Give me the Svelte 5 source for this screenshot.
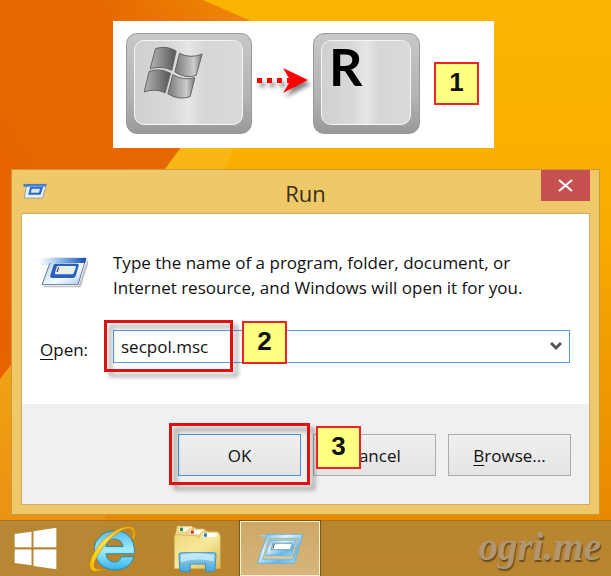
<script>
	let command = 'secpol.msc';
	const pinned = ['Start', 'Internet Explorer', 'File Explorer'];
</script>

<div class="desktop">
	<svg class="wallpaper" viewBox="0 0 611 576" preserveAspectRatio="none" aria-hidden="true">
		<defs>
			<linearGradient id="sun" x1="0" y1="0" x2="0" y2="1">
				<stop offset="0" stop-color="#fbb500" />
				<stop offset=".35" stop-color="#f9ae00" />
				<stop offset="1" stop-color="#e68200" />
			</linearGradient>
			<linearGradient id="ember" x1="0" y1="1" x2="1" y2="0">
				<stop offset="0" stop-color="#e76200" />
				<stop offset=".7" stop-color="#e66a00" />
				<stop offset="1" stop-color="#f08a06" />
			</linearGradient>
		</defs>
		<rect width="611" height="576" fill="url(#sun)" />
		<path d="M0 0H203L251 21 190 135 165 169 0 379Z" fill="url(#ember)" />
		<path d="M190 135 165 169 0 379V576H85L225 169 234 148V135Z" fill="#fff" opacity=".08" />
	</svg>

	<section class="keys">
		<div class="key wide">
			<div class="cap">
				<svg class="flag" viewBox="425 138 185 162" aria-label="Windows key">
					<defs>
						<linearGradient id="pane">
							<stop offset="0" stop-color="#b5b5b5" />
							<stop offset="1" stop-color="#555" />
						</linearGradient>
						<linearGradient id="pane2">
							<stop offset="0" stop-color="#777" />
							<stop offset=".7" stop-color="#ccc" />
							<stop offset="1" stop-color="#777" />
						</linearGradient>
					</defs>
					<g stroke="#666" stroke-width="3">
						<path d="M465 146Q497 135 527 153L514 211Q482 196 449 206Z" fill="url(#pane)" />
						<path d="M537 160Q570 177 605 162L587 226Q558 238 523 216Z" fill="url(#pane2)" />
						<path d="M446 214Q478 203 510 220L494 278Q463 264 431 276Z" fill="url(#pane)" />
						<path d="M517 224Q549 243 583 233L569 290Q534 302 502 281Z" fill="url(#pane2)" />
					</g>
				</svg>
			</div>
		</div>
		<svg class="arrow" viewBox="0 0 56 34" aria-hidden="true">
			<path d="M2 15h5v5H2zM12 15h5v5h-5zM22 15h5v5h-5zM28 5 53 17 28 30 34 20H32V15h2Z" fill="#f00" />
		</svg>
		<div class="key">
			<div class="cap letter">R</div>
		</div>
		<span class="badge">1</span>
	</section>

	<main class="window">
		<header>
			<svg class="small-run" viewBox="72 68 74 48" aria-hidden="true">
				<path d="M83 72H142L130 113H75Z" fill="#e7f1fb" stroke="#6888aa" stroke-width="2" />
				<path d="M73 71H142L139 79H73Z" fill="#3477cf" opacity=".9" />
				<path d="M93 80H132L124 103H87Z" fill="#2d68c3" />
				<path d="M98 85H123L119 97H95Z" fill="#d9e5e3" />
			</svg>
			<h1>Run</h1>
			<button class="close" aria-label="Close">
				<svg viewBox="0 0 15 13"><path d="M1 1 14 12M14 1 1 12" stroke="#fff" stroke-width="2" /></svg>
			</button>
		</header>

		<div class="client">
			<div class="body">
				<div class="intro">
					<svg class="large-run" viewBox="120 288 150 96" aria-hidden="true">
						<defs>
							<linearGradient id="glass" x1="0" y1="0" x2="1" y2="1">
								<stop offset="0" stop-color="#a3caee" />
								<stop offset=".6" stop-color="#f5faff" />
								<stop offset="1" stop-color="#a7c5ee" />
							</linearGradient>
							<linearGradient id="trail">
								<stop offset="0" stop-color="#fff" />
								<stop offset=".5" stop-color="#80b1e6" />
								<stop offset="1" stop-color="#164dac" />
							</linearGradient>
						</defs>
						<path d="M133 382H242L265 309 262 298 236 378H130Z" fill="#999" opacity=".6" />
						<path d="M120 296H155L148 316H126Z" fill="#cfe4f8" opacity=".7" />
						<path d="M155 295H258L234 374H126Z" fill="url(#glass)" stroke="#607897" stroke-width="3" />
						<path d="M120 294H259L255 309H120Z" fill="url(#trail)" />
						<path d="M166 311H231Q238 311 236 318L227 348Q225 354 218 354H157Q149 354 151 346L160 317Q161 311 166 311Z" fill="#2860bd" />
						<path d="M174 318H225Q229 318 228 322L221 340Q220 343 215 343H168Q164 343 165 338L170 322Q171 318 174 318Z" fill="#e8eeec" />
						<path d="M176 322 171 336" stroke="#222" stroke-width="3" />
					</svg>
					<p>Type the name of a program, folder, document, or Internet resource, and Windows will open it for you.</p>
				</div>
				<div class="field">
					<label for="command"><u>O</u>pen:</label>
					<div class="combo">
						<input id="command" type="text" bind:value={command} />
						<button class="drop" aria-label="Show history">
							<svg viewBox="0 0 12 9"><path d="M1 1 6 6 11 1" fill="none" stroke="#555" stroke-width="3" /></svg>
						</button>
						<span class="mark mark-input"></span>
						<span class="badge badge-input">2</span>
					</div>
				</div>
			</div>
			<footer>
				<div class="confirm">
					<button class="push default">OK</button>
					<span class="mark mark-ok"></span>
					<span class="badge badge-ok">3</span>
				</div>
				<button class="push">Cancel</button>
				<button class="push"><u>B</u>rowse...</button>
			</footer>
		</div>
	</main>

	<nav class="taskbar">
		<button class="task" aria-label={pinned[0]}>
			<svg class="start" viewBox="40 79 130 130">
				<path d="M42 100 93 93V140H42ZM99 92 168 81V140H99ZM42 147H93V195L42 188ZM99 147H168V207L99 197Z" fill="#fff" />
			</svg>
		</button>
		<button class="task" aria-label={pinned[1]}>
			<svg class="ie" viewBox="264 70 142 140">
				<defs>
					<linearGradient id="ie-blue" x1="0" y1="0" x2="0" y2="1">
						<stop offset="0" stop-color="#55bce9" />
						<stop offset=".5" stop-color="#a1edff" />
						<stop offset="1" stop-color="#32b4ec" />
					</linearGradient>
					<linearGradient id="ring" x1="1" y1="0" x2="0" y2="1">
						<stop offset="0" stop-color="#e8a000" />
						<stop offset=".5" stop-color="#ffe450" />
						<stop offset="1" stop-color="#f6b800" />
					</linearGradient>
				</defs>
				<path d="M400 165H361Q357 181 341 181 319 181 315 156H401Q404 120 382 100 364 84 338 86 302 89 285 120 275 142 286 169 302 204 343 205 388 204 400 165ZM315 134Q319 113 341 111 364 113 367 134Z" fill="url(#ie-blue)" fill-rule="evenodd" stroke="#2588af" stroke-width="3" />
				<path d="M400 112C410 86 400 73 383 73 355 73 318 99 292 133 268 165 260 194 271 205 280 213 295 208 308 201 296 203 286 204 281 198 275 187 287 163 308 134 331 104 362 80 384 80 397 81 399 92 394 108Z" fill="url(#ring)" stroke="#c48100" stroke-width="2" />
			</svg>
		</button>
		<button class="task" aria-label={pinned[2]}>
			<svg class="folder" viewBox="516 70 146 146">
				<defs>
					<linearGradient id="manila" x1="0" y1="0" x2="1" y2="1">
						<stop offset="0" stop-color="#eed57a" />
						<stop offset=".5" stop-color="#f7e99c" />
						<stop offset="1" stop-color="#d9bd56" />
					</linearGradient>
					<linearGradient id="stand" x1="0" y1="0" x2="0" y2="1">
						<stop offset="0" stop-color="#9bd5ef" />
						<stop offset="1" stop-color="#4ba7da" />
					</linearGradient>
				</defs>
				<path d="M523 100 528 77Q530 74 536 76H571L577 81H585V110H523Z" fill="#edd68a" stroke="#c4a046" />
				<path d="M535 80H571V92H535Z" fill="#fff" /><path d="M537 81H546V91H537Z" fill="#258a54" />
				<path d="M553 110 560 88Q561 84 566 84H608L614 90H621V115H553Z" fill="#efd991" stroke="#c4a046" />
				<path d="M567 88H607V100H567Z" fill="#fff" /><path d="M569 89H578V99H569Z" fill="#d73525" />
				<path d="M520 106Q520 101 526 102L584 105 594 111 600 95Q602 92 607 93H647Q653 93 654 100L657 106V203H520Z" fill="url(#manila)" stroke="#cdac4c" stroke-width="2" />
				<path d="M605 97H646V109H605Z" fill="#fff" /><path d="M608 98H617V108H608Z" fill="#2879c2" />
				<path d="M534 163Q534 156 542 156H636Q644 156 644 163L641 207Q640 212 634 212H613V189H567V212H543Q537 212 536 205Z" fill="url(#stand)" stroke="#3a91c3" stroke-width="3" />
				<path d="M540 162Q589 150 638 164L637 182Q588 168 539 184Z" fill="#d5f2fc" opacity=".7" />
			</svg>
		</button>
		<button class="task active" aria-label="Run">
			<svg class="run-task" viewBox="78 92 145 98">
				<defs>
					<linearGradient id="ice" x1="0" y1="0" x2="1" y2="1">
						<stop offset="0" stop-color="#54b1ea" />
						<stop offset=".35" stop-color="#e3f5fd" />
						<stop offset=".7" stop-color="#62b8ec" />
						<stop offset="1" stop-color="#b8e2f6" />
					</linearGradient>
				</defs>
				<path d="M86 102H112M93 108H110M100 115H108" stroke="#9fcbe0" stroke-width="3" />
				<path d="M112 98H219L194 186H82Z" fill="url(#ice)" stroke="#6fb1d8" stroke-width="3" />
				<path d="M116 110H207L188 174H98Z" fill="#d3c79d" stroke="#6fb1d8" stroke-width="2" />
				<path d="M121 116H199L184 162H107Z" fill="url(#ice)" stroke="#5fa8d8" stroke-width="2" />
				<path d="M130 125H188L182 145H123Z" fill="#fff" stroke="#6894b5" stroke-width="3" />
				<path d="M133 127 129 142" stroke="#456" stroke-width="3" />
			</svg>
		</button>
		<span class="watermark">ogri.me</span>
	</nav>
</div>

<style>
	:global(body) {
		margin: 0;
	}
	* {
		box-sizing: border-box;
	}
	.desktop {
		position: relative;
		display: flex;
		flex-direction: column;
		min-height: 100vh;
		overflow: hidden;
		color: #111;
		font: 17px/25px "Open Sans", "Noto Sans", sans-serif;
	}
	.wallpaper {
		position: absolute;
		inset: 0;
		width: 100%;
		height: 100%;
		z-index: -1;
	}
	svg {
		display: block;
		flex: none;
	}
	.keys {
		align-self: flex-start;
		display: flex;
		align-items: center;
		margin: 21px 0 0 113px;
		padding: 12px 15px 14px 13px;
		background: #fff;
	}
	.key {
		width: 107px;
		height: 101px;
		padding: 6px 8px 8px 7px;
		border: 1px solid #999;
		border-radius: 11px;
		background: linear-gradient(#c8c8c8, #b2b2b2 65%, #999);
	}
	.key.wide {
		width: 126px;
	}
	.cap {
		height: 100%;
		padding: 5px 7px;
		border: 1px solid #f5f5f5;
		border-radius: 10px;
		background: linear-gradient(90deg, #d0d0d0, #d9d9d9 35%, #e6e6e6 50%, #d6d6d6 65%, #dadada);
		color: #000;
	}
	.letter {
		padding: 4px 7px;
		font: bold 52px/42px Lato, sans-serif;
	}
	.flag {
		width: 62px;
		height: 54px;
	}
	.arrow {
		width: 56px;
		height: 34px;
		margin: 0 2px 8px 3px;
		filter: drop-shadow(3px 4px 2px rgba(0, 0, 0, 0.5));
	}
	.badge {
		width: 45px;
		height: 43px;
		border: 2px solid #ef2323;
		background: #ffff82;
		color: #111;
		font: bold 26px/37px "Liberation Sans", sans-serif;
		text-align: center;
	}
	.key + .badge {
		margin-left: 14px;
	}
	.window {
		margin: 21px 11px 5px;
		padding: 0 9px 9px;
		border: 1px solid #c99a3d;
		background: #efc869;
	}
	header {
		display: grid;
		grid-template-columns: 1fr auto 1fr;
		align-items: start;
		height: 43px;
	}
	h1 {
		margin: 9px 0 0;
		color: #382e18;
		font-size: 22px;
		font-weight: 400;
		line-height: 29px;
	}
	.small-run {
		width: 25px;
		height: 16px;
		margin: 13px 0 0 2px;
	}
	button {
		padding: 0;
		border: 0;
		color: inherit;
		font: inherit;
	}
	.close {
		display: grid;
		place-items: center;
		justify-self: end;
		width: 49px;
		height: 31px;
		background: #c75050;
	}
	.close svg {
		width: 15px;
		height: 13px;
	}
	.client {
		border: 1px solid #d0ad61;
		background: #fff;
	}
	.body {
		padding: 36px 19px 41px 18px;
	}
	.intro {
		display: grid;
		grid-template-columns: 73px 1fr;
		align-items: start;
	}
	.large-run {
		width: 50px;
		height: 32px;
		margin-top: 6px;
	}
	p {
		max-width: 424px;
		margin: 0;
	}
	.field {
		display: grid;
		grid-template-columns: 73px 1fr;
		align-items: center;
		margin-top: 30px;
	}
	label {
		padding-top: 6px;
	}
	u {
		text-underline-offset: 3px;
	}
	.combo {
		position: relative;
		display: flex;
		height: 33px;
		border: 1px solid #569de5;
	}
	input {
		flex: 1;
		min-width: 0;
		padding: 0 7px;
		border: 0;
		outline: 0;
		background: none;
		color: inherit;
		font: inherit;
	}
	.drop {
		display: grid;
		place-items: center;
		width: 26px;
		background: none;
	}
	.drop svg {
		width: 12px;
		height: 9px;
	}
	.mark {
		position: absolute;
		border: 3px solid #e01010;
		filter: drop-shadow(5px 5px 2px rgba(0, 0, 0, 0.35));
		pointer-events: none;
	}
	.mark-input {
		top: -11px;
		left: -10px;
		width: 129px;
		height: 52px;
	}
	.badge-input {
		position: absolute;
		top: -10px;
		left: 128px;
	}
	footer {
		display: flex;
		justify-content: flex-end;
		gap: 12px;
		padding: 30px 18px 28px;
		background: #f0f0f0;
	}
	.confirm {
		position: relative;
		z-index: 1;
	}
	.push {
		width: 123px;
		height: 42px;
		border: 1px solid #acacac;
		background: linear-gradient(#f0f0f0, #e4e4e4);
	}
	.default {
		border-color: #4a94dc;
	}
	.mark-ok {
		inset: -11px -9px -9px;
	}
	.badge-ok {
		position: absolute;
		top: -8px;
		left: 138px;
	}
	.taskbar {
		display: flex;
		align-items: center;
		height: 56px;
		margin-top: auto;
		border-top: 1px solid #a6741f;
		background: rgba(169, 133, 62, 0.77);
	}
	.task {
		display: grid;
		place-items: center;
		width: 85px;
		height: 55px;
		background: none;
	}
	.task:first-child {
		width: 70px;
	}
	.start {
		width: 43px;
		height: 43px;
	}
	.ie {
		width: 47px;
		height: 47px;
	}
	.folder {
		width: 49px;
		height: 49px;
	}
	.active {
		width: 80px;
		border: 1px solid #fff2ce;
		outline: 1px solid #79571f;
		background: linear-gradient(#cda766, #d6b67d);
	}
	.run-task {
		width: 48px;
		height: 33px;
	}
	.watermark {
		margin: 0 10px 4px auto;
		color: #b09770;
		font: italic bold 39px/44px "Liberation Serif", serif;
		text-shadow: 1px 2px 1px #6b4d20;
	}
</style>
